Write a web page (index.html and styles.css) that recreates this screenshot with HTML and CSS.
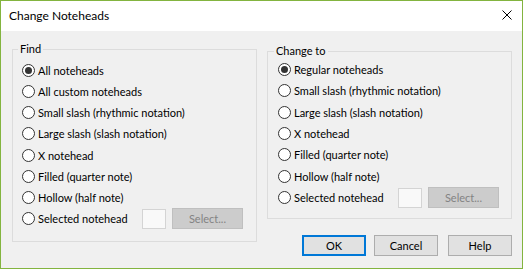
FILE: index.html
```html
<!DOCTYPE html>
<html lang="en">
<head>
    <meta charset="UTF-8">
    <title>Change Noteheads</title>
    <link rel="stylesheet" href="styles.css">
</head>
<body>
    <div class="window">
        <div class="titlebar">
            <span class="title">Change Noteheads</span>
            <svg class="close" viewBox="0 0 10 10"><path d="M0.5 0.5L9.5 9.5M9.5 0.5L0.5 9.5" stroke="#000" stroke-width="1" fill="none"/></svg>
        </div>
        <div class="client">
            <fieldset class="group find">
                <legend>Find</legend>
                <label class="option"><input type="radio" name="find" checked><span>All noteheads</span></label>
                <label class="option"><input type="radio" name="find"><span>All custom noteheads</span></label>
                <label class="option"><input type="radio" name="find"><span>Small slash (rhythmic notation)</span></label>
                <label class="option"><input type="radio" name="find"><span>Large slash (slash notation)</span></label>
                <label class="option"><input type="radio" name="find"><span>X notehead</span></label>
                <label class="option"><input type="radio" name="find"><span>Filled (quarter note)</span></label>
                <label class="option"><input type="radio" name="find"><span>Hollow (half note)</span></label>
                <div class="option">
                    <label class="option-label"><input type="radio" name="find"><span>Selected notehead</span></label>
                    <span class="swatch"></span>
                    <button class="select" disabled>Select...</button>
                </div>
            </fieldset>
            <div class="right">
                <fieldset class="group change">
                    <legend>Change to</legend>
                    <label class="option"><input type="radio" name="change" checked><span>Regular noteheads</span></label>
                    <label class="option"><input type="radio" name="change"><span>Small slash (rhythmic notation)</span></label>
                    <label class="option"><input type="radio" name="change"><span>Large slash (slash notation)</span></label>
                    <label class="option"><input type="radio" name="change"><span>X notehead</span></label>
                    <label class="option"><input type="radio" name="change"><span>Filled (quarter note)</span></label>
                    <label class="option"><input type="radio" name="change"><span>Hollow (half note)</span></label>
                    <div class="option">
                        <label class="option-label"><input type="radio" name="change"><span>Selected notehead</span></label>
                        <span class="swatch"></span>
                        <button class="select" disabled>Select...</button>
                    </div>
                </fieldset>
                <div class="buttons">
                    <button class="btn default">OK</button>
                    <button class="btn">Cancel</button>
                    <button class="btn help">Help</button>
                </div>
            </div>
        </div>
    </div>
</body>
</html>
```

FILE: styles.css
```css
* {
    box-sizing: border-box;
}
body {
    margin: 0;
    font-family: Lato, "Liberation Sans", sans-serif;
    font-size: 11px;
    color: #000;
}
.window {
    width: 523px;
    height: 269px;
    border: 1px solid #83b43f;
    background: #f0f0f0;
    display: flex;
    flex-direction: column;
}
.titlebar {
    height: 30px;
    flex: none;
    background: #fff;
    display: flex;
    justify-content: space-between;
    align-items: flex-start;
    padding: 0 10px 0 8px;
}
.title {
    font-size: 12px;
    line-height: 30px;
}
.close {
    width: 10px;
    height: 10px;
    margin-top: 9px;
}
.client {
    flex: 1;
    display: flex;
    align-items: flex-start;
    gap: 10px;
    padding: 10px 0 0 11px;
}
.group {
    margin: 0;
    min-width: 0;
    border: 1px solid #dcdcdc;
}
.group legend {
    padding: 0 2px;
    margin-left: -4px;
    line-height: 16px;
}
.find {
    width: 245px;
    padding: 3px 12px 12px 9px;
}
.find .option {
    height: 21.15px;
}
.right {
    width: 245px;
    display: flex;
    flex-direction: column;
}
.change {
    margin-top: 2px;
    padding: 0 12px 9.5px 10px;
}
.change .option {
    height: 21.33px;
}
.option, .option-label {
    display: flex;
    align-items: center;
    white-space: nowrap;
}
.option-label {
    width: 120px;
}
input[type="radio"] {
    appearance: none;
    width: 13px;
    height: 13px;
    margin: 0 3px 0 0;
    border: 1px solid #333;
    border-radius: 50%;
    background: #fff;
    display: grid;
    place-content: center;
    flex: none;
}
input[type="radio"]:checked::before {
    content: "";
    width: 7px;
    height: 7px;
    border-radius: 50%;
    background: #333;
}
.swatch {
    width: 24px;
    height: 20px;
    border: 1px solid #d4d4d4;
    background: #f9f9f9;
}
.select {
    width: 71px;
    height: 21px;
    margin-left: 6px;
    padding: 0;
    font: inherit;
    color: #838383;
    background: #cccccc;
    border: 1px solid #bfbfbf;
}
.buttons {
    display: flex;
    justify-content: flex-end;
    gap: 8px;
    margin-top: 16px;
}
.btn {
    width: 64px;
    height: 21px;
    padding: 0;
    font: inherit;
    color: #000;
    background: #e1e1e1;
    border: 1px solid #adadad;
}
.btn.default {
    border: 2px solid #0078d7;
}
.help {
    margin-left: 2px;
}
```
